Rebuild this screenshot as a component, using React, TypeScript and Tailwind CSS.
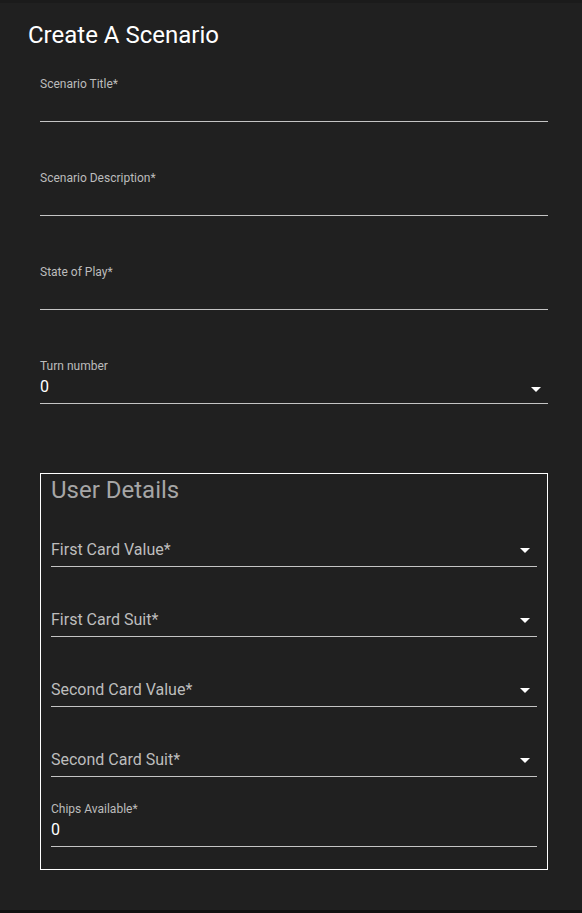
const font = { fontFamily: "Roboto, 'Liberation Sans', sans-serif" };

function Arrow() {
  return (
    <svg width="24" height="24" viewBox="0 0 24 24" className="absolute right-0 top-1/2 -translate-y-1/2 fill-white">
      <path d="M7 10l5 5 5-5z" />
    </svg>
  );
}

function TextField({ label, value, select }: { label: string; value?: string; select?: boolean }) {
  return (
    <div className="relative">
      <div className="text-[12px] leading-4 text-[#bcbcbc]">{label}</div>
      <div className="relative h-[30px] border-b border-[#c4c4c4] pt-[1px]">
        {value !== undefined && <div className="text-[16px] leading-6 text-white">{value}</div>}
        {select && <Arrow />}
      </div>
    </div>
  );
}

function SelectField({ label }: { label: string }) {
  return (
    <div className="relative flex h-[30px] items-start border-b border-[#c4c4c4] pt-[1px]">
      <span className="text-[16px] leading-6 text-[#bdbdbd]">{label}</span>
      <svg width="24" height="24" viewBox="0 0 24 24" className="absolute right-0 top-[1px] fill-white">
        <path d="M7 10l5 5 5-5z" />
      </svg>
    </div>
  );
}

export default function App() {
  return (
    <div style={font} className="min-h-screen bg-[#121212]">
      <div className="h-[3px] bg-[#1b1b1b]" />
      <div className="h-[907px] bg-[#202020]">
        <h2 className="pl-[28px] pt-[16px] text-[24px] leading-8 text-white">Create A Scenario</h2>
        <div className="mt-[25px] flex flex-col gap-[48px] pl-[40px] pr-[34px]">
          <TextField label="Scenario Title*" />
          <TextField label="Scenario Description*" />
          <TextField label="State of Play*" />
          <TextField label="Turn number" value="0" select />
        </div>
        <div className="ml-[40px] mr-[34px] mt-[69px] border border-white px-[10px] pb-[22px]">
          <div className="text-[24px] leading-8 text-[#a6a6a6]">User Details</div>
          <div className="mt-[31px] flex flex-col gap-[40px]">
            <SelectField label="First Card Value*" />
            <SelectField label="First Card Suit*" />
            <SelectField label="Second Card Value*" />
            <SelectField label="Second Card Suit*" />
          </div>
          <div className="mt-[24px]">
            <TextField label="Chips Available*" value="0" />
          </div>
        </div>
      </div>
    </div>
  );
}
